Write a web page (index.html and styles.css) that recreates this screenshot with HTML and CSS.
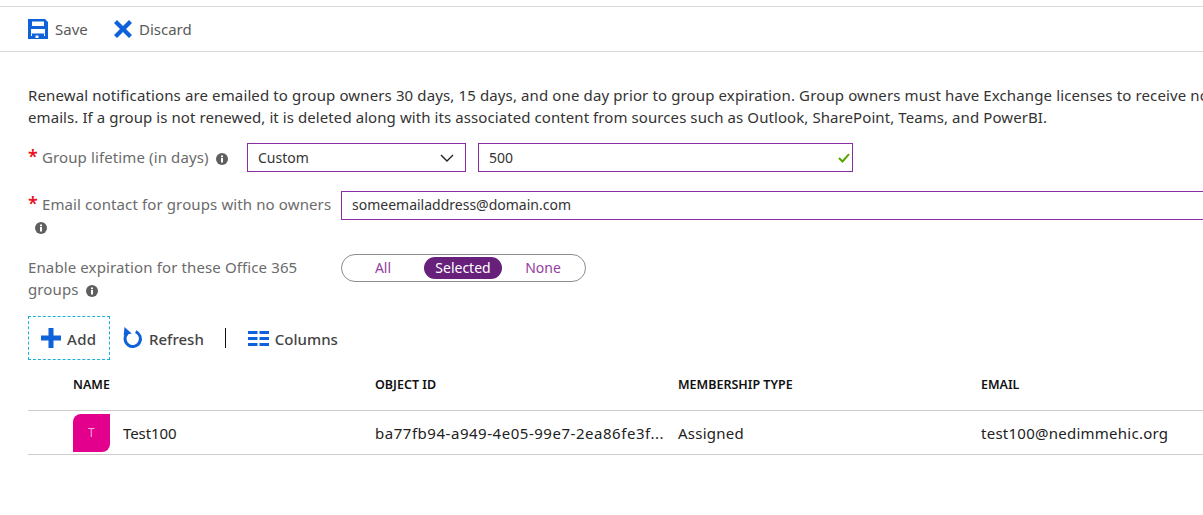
FILE: index.html
```html
<!DOCTYPE html>
<html lang="en">
<head>
<meta charset="utf-8">
<title>Group expiration</title>
<link rel="stylesheet" href="styles.css">
</head>
<body>
<div class="page">
  <div class="commandbar">
    <span class="cmd cmd-save">
      <svg class="ico-save" width="20" height="20" viewBox="0 0 20 20"><path fill="#0f62d9" fill-rule="evenodd" d="M0 0h17l3 3v17H0zM4 2.500V7h12V2.500zM3 10v4.500h14V10zM7.500 16.500V19h3v-2.500z"/><path fill="#fff" d="M3 14.500h1V17H3zM16 14.500h1V17h-1z"/></svg>
      <span>Save</span>
    </span>
    <span class="cmd cmd-discard">
      <svg class="ico-x" width="18" height="18" viewBox="0 0 18 18"><path fill="#0f62d9" d="M3 0l6 6 6-6 3 3-6 6 6 6-3 3-6-6-6 6-3-3 6-6-6-6z"/></svg>
      <span>Discard</span>
    </span>
  </div>
  <div class="content">
    <p class="intro"><span class="intro-first">Renewal notifications are emailed to group owners 30 days, 15 days, and one day prior to group expiration. Group owners must have Exchange licenses to receive notification</span><br>emails. If a group is not renewed, it is deleted along with its associated content from sources such as Outlook, SharePoint, Teams, and PowerBI.</p>

    <div class="row row-lifetime">
      <div class="label"><span class="req">*</span> Group lifetime (in days) <svg class="info" viewBox="0 0 12 12"><circle cx="6" cy="6" r="6" fill="#5f5f5f"/><rect x="5" y="5" width="2" height="4.500" fill="#fff"/><rect x="5" y="2.500" width="2" height="1.700" fill="#fff"/></svg></div>
      <div class="field select-field">
        <span>Custom</span>
        <svg width="14" height="8" viewBox="0 0 14 8"><path d="M1 1l6 6 6-6" fill="none" stroke="#222" stroke-width="1.400"/></svg>
      </div>
      <div class="field num-field">
        <span>500</span>
        <svg width="12" height="10" viewBox="0 0 12 10"><path d="M1 5l3.500 3.500L11 1.200" fill="none" stroke="#57a300" stroke-width="2"/></svg>
      </div>
    </div>

    <div class="row row-email">
      <div class="label label-email"><span class="req">*</span> Email contact for groups with no owners <svg class="info info-block" viewBox="0 0 12 12"><circle cx="6" cy="6" r="6" fill="#5f5f5f"/><rect x="5" y="5" width="2" height="4.500" fill="#fff"/><rect x="5" y="2.500" width="2" height="1.700" fill="#fff"/></svg></div>
      <div class="field email-field"><span>someemailaddress@domain.com</span></div>
    </div>

    <div class="row row-toggle">
      <div class="label label-toggle">Enable expiration for these Office 365 groups <svg class="info" viewBox="0 0 12 12"><circle cx="6" cy="6" r="6" fill="#5f5f5f"/><rect x="5" y="5" width="2" height="4.500" fill="#fff"/><rect x="5" y="2.500" width="2" height="1.700" fill="#fff"/></svg></div>
      <div class="pill">
        <span class="opt">All</span>
        <span class="opt opt-on">Selected</span>
        <span class="opt">None</span>
      </div>
    </div>

    <div class="tools">
      <span class="tool tool-add">
        <svg width="20" height="20" viewBox="0 0 20 20"><path fill="#0f62d9" d="M7.500 0h5v7.500H20v5h-7.500V20h-5v-7.500H0v-5h7.500z"/></svg>
        <span>Add</span>
      </span>
      <span class="tool tool-refresh">
        <svg width="20" height="22" viewBox="0 0 20 22"><path fill="none" stroke="#0f62d9" stroke-width="3" d="M12.700 4.700A7.700 7.700 0 1 1 4.200 6.500"/><path fill="#0f62d9" d="M1.500 0l7.200 6.600-8 1.700z"/></svg>
        <span>Refresh</span>
      </span>
      <span class="sep"></span>
      <span class="tool tool-cols">
        <svg width="21" height="15" viewBox="0 0 21 15"><path fill="#0f62d9" d="M0 0h9.500v3H0zM11.500 0H21v3h-9.500zM0 6h9.500v3H0zM11.500 6H21v3h-9.500zM0 12h9.500v3H0zM11.500 12H21v3h-9.500z"/></svg>
        <span>Columns</span>
      </span>
    </div>

    <div class="table">
      <div class="thead">
        <span class="cell cell-name">NAME</span>
        <span class="cell">OBJECT ID</span>
        <span class="cell">MEMBERSHIP TYPE</span>
        <span class="cell">EMAIL</span>
      </div>
      <div class="trow">
        <span class="cell cell-name cell-user"><span class="avatar">T</span><span class="user-name">Test100</span></span>
        <span class="cell cell-trunc">ba77fb94-a949-4e05-99e7-2ea86fe3f...</span>
        <span class="cell">Assigned</span>
        <span class="cell">test100@nedimmehic.org</span>
      </div>
    </div>
  </div>
</div>
</body>
</html>
```
FILE: styles.css
```css
* { box-sizing: border-box; }
html, body { margin: 0; padding: 0; height: 100%; background: #fff; overflow: hidden; }
body { font-family: "Noto Sans", "Open Sans", sans-serif; font-size: 15px; color: #222; }
.page { width: 1203px; height: 515px; overflow: hidden; padding-top: 6px; }

.commandbar { height: 46px; border-top: 1px solid #d9d9d9; border-bottom: 1px solid #d9d9d9; display: flex; align-items: center; padding-left: 28px; color: #595959; }
.cmd { display: flex; align-items: center; }
.cmd-save { gap: 7px; width: 86px; }
.cmd-discard { gap: 7px; }

.content { padding-left: 28px; width: 1500px; }
.intro { margin: 32px 0 0; line-height: 22px; color: #333; white-space: nowrap; letter-spacing: 0.08px; }
.intro-first { letter-spacing: 0.125px; }

.row { display: flex; align-items: flex-start; }
.label { color: #6b6b6b; line-height: 22px; letter-spacing: 0.12px; }
.req { color: #e81123; font-size: 18px; line-height: 14px; font-weight: 600; }
.info { width: 12px; height: 12px; margin-left: 3px; vertical-align: -2px; }
.info-block { display: block; margin: 7px 0 0 7px; }

.field { height: 29px; border: 1px solid #8a2da5; display: flex; align-items: center; justify-content: space-between; color: #333; padding: 0 10px; font-size: 14px; }

.row-lifetime { margin-top: 15px; }
.row-lifetime .label { width: 219px; line-height: 29px; }
.select-field { width: 219px; margin-right: 12px; padding-right: 11px; }
.num-field { width: 375px; padding-right: 2px; }

.row-email { margin-top: 19px; }
.label-email { width: 313px; padding-top: 2px; }
.email-field { width: 1000px; padding-bottom: 2px; }

.row-toggle { margin-top: 20px; }
.label-toggle { width: 313px; padding: 2px 30px 0 0; }
.pill { width: 245px; height: 28px; border: 1px solid #8c8c8c; border-radius: 14px; display: flex; align-items: center; padding-left: 6px; color: #93409f; font-size: 14px; }
.opt { width: 70px; text-align: center; line-height: 22px; }
.opt-on { width: 78px; margin: 0 6px; background: #68217a; color: #fff; border-radius: 11px; }

.tools { display: flex; align-items: center; margin-top: 16px; height: 44px; color: #444; }
.tool { display: flex; align-items: center; gap: 6px; font-weight: 500; }
.tool > span { padding-top: 2px; }
.tool-add { width: 82px; height: 44px; border: 1px dashed #1ab0d8; padding-left: 12px; letter-spacing: 0.3px; }
.tool-refresh { margin-left: 13px; }
.sep { width: 1px; height: 20px; background: #111; margin: 0 22px 0 21px; }

.table { margin-top: 2px; }
.thead, .trow { display: grid; grid-template-columns: 347px 303px 303px 303px; }
.thead { height: 49px; font-size: 12.500px; font-weight: 600; color: #111; border-bottom: 1px solid #ccc; padding-top: 14px; }
.trow { height: 44px; align-items: center; font-size: 15px; color: #222; border-bottom: 1px solid #ccc; letter-spacing: 0.25px; }
.cell-name { padding-left: 45px; }
.cell-trunc { letter-spacing: 0.53px; }
.cell-user { display: flex; align-items: center; gap: 13px; }
.user-name { letter-spacing: -0.1px; }
.avatar { width: 37px; height: 38px; background: #e3008c; color: #f4a6d8; border-radius: 8px 0 8px 0; display: flex; align-items: center; justify-content: center; font-size: 12px; }
```
